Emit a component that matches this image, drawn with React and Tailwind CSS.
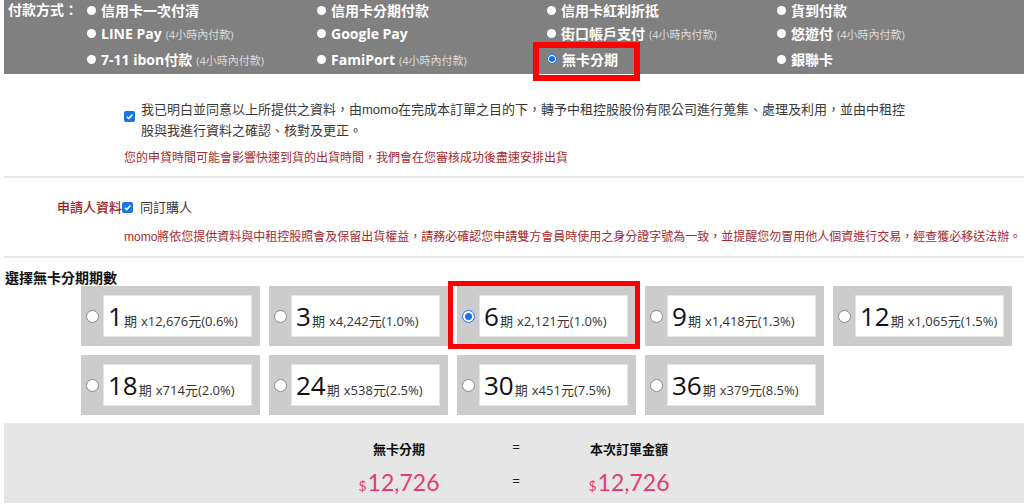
import React from "react";

const cjk = '"Noto Sans CJK TC", sans-serif';
const barFont = { fontFamily: '"Open Sans", "Noto Sans CJK TC", sans-serif' };
const bodyFont = { fontFamily: '"Liberation Sans", "Noto Sans CJK TC", sans-serif' };

function Dot() {
  return <span className="inline-block w-[9px] h-[9px] rounded-full bg-white shrink-0" />;
}
function DotSel() {
  return (
    <span className="inline-flex items-center justify-center w-[10px] h-[10px] rounded-full bg-white border border-[#1a73e8] shrink-0">
      <span className="w-[6px] h-[6px] rounded-full bg-[#1a73e8]" />
    </span>
  );
}

function PayItem({ label, note, selected, children }) {
  return (
    <div className="relative flex items-center gap-[5px] w-[230px] pl-[1px]">
      {selected ? <DotSel /> : <Dot />}
      <span className="text-white font-bold text-[14px] whitespace-nowrap">
        {label}
        {note && <span className="font-normal text-[11px] text-[#dcdcdc] ml-[4px]">{note}</span>}
      </span>
      {children}
    </div>
  );
}

function Check() {
  return (
    <span className="inline-flex items-center justify-center w-[11px] h-[11px] rounded-[2px] bg-[#1a73e8] shrink-0">
      <svg width="9" height="9" viewBox="0 0 10 10">
        <path d="M2 5.2 L4.2 7.3 L8.2 2.8" fill="none" stroke="white" strokeWidth="1.7" />
      </svg>
    </span>
  );
}

function Radio({ selected }) {
  if (selected)
    return (
      <span className="inline-flex items-center justify-center w-[13px] h-[13px] rounded-full border border-[#1a73e8] bg-white shrink-0">
        <span className="w-[7px] h-[7px] rounded-full bg-[#1a73e8]" />
      </span>
    );
  return <span className="inline-block w-[13px] h-[13px] rounded-full border border-[#8a8a8a] bg-white shrink-0" />;
}

const plans = [
  ["1", "12,676", "0.6"],
  ["3", "4,242", "1.0"],
  ["6", "2,121", "1.0"],
  ["9", "1,418", "1.3"],
  ["12", "1,065", "1.5"],
  ["18", "714", "2.0"],
  ["24", "538", "2.5"],
  ["30", "451", "7.5"],
  ["36", "379", "8.5"],
];

function Card({ n, amt, rate, selected }) {
  return (
    <div className="relative h-[60px] bg-[#cccccc] flex items-center pl-[5px] pr-[8px] py-[9px]">
      <Radio selected={selected} />
      <div className="ml-[4px] flex-1 h-full bg-white border border-[#e4e4e4] flex items-center pl-[4px] pt-[2px]">
        <span className="flex items-baseline text-[#333]" style={barFont}>
          <span className="text-[26px] leading-none text-[#111]">{n}</span>
          <span className="text-[13px] ml-[1px]" style={{ fontFamily: cjk }}>期</span>
          <span className="text-[13px] ml-[4px]">x{amt}元({rate}%)</span>
        </span>
      </div>
      {selected && (
        <div className="absolute left-[-9px] top-[-5px] w-[192px] h-[68px] border-[5px] border-[#ff0000] z-10" />
      )}
    </div>
  );
}

function Amount() {
  return (
    <div className="mt-[10px] flex items-baseline text-[#e5397a]" style={{ fontFamily: '"Lato", sans-serif' }}>
      <span className="text-[14px] mr-[1px]">$</span>
      <span className="text-[23px] leading-[28px] font-normal">12,726</span>
    </div>
  );
}

export default function App() {
  return (
    <div className="w-[1024px] h-[504px] overflow-hidden bg-white pl-[4px]" style={bodyFont}>
      {/* Payment method bar */}
      <div className="bg-[#808080] h-[74px] flex" style={barFont}>
        <div className="w-[82px] pl-[4px] text-white font-bold text-[14px] leading-[20px]">付款方式：</div>
        <div className="flex flex-col">
          <div className="flex h-[20px]">
            <PayItem label="信用卡一次付清" />
            <PayItem label="信用卡分期付款" />
            <PayItem label="信用卡紅利折抵" />
            <PayItem label="貨到付款" />
          </div>
          <div className="flex h-[26px]">
            <PayItem label="LINE Pay" note="(4小時內付款)" />
            <PayItem label="Google Pay" />
            <PayItem label="街口帳戶支付" note="(4小時內付款)" />
            <PayItem label="悠遊付" note="(4小時內付款)" />
          </div>
          <div className="flex h-[26px]">
            <PayItem label="7-11 ibon付款" note="(4小時內付款)" />
            <PayItem label="FamiPort" note="(4小時內付款)" />
            <PayItem label="無卡分期" selected>
              <div className="absolute left-[-13px] top-[-4px] w-[107px] h-[39px] border-[6px] border-[#ff0000] z-10" />
            </PayItem>
            <PayItem label="銀聯卡" />
          </div>
        </div>
      </div>

      {/* Consent */}
      <div className="pl-[120px] pt-[25px]">
        <div className="flex items-start gap-[6px]">
          <span className="mt-[5px]"><Check /></span>
          <p className="text-[13px] leading-[21px] text-[#3a3a3a] whitespace-nowrap">
            我已明白並同意以上所提供之資料，由momo在完成本訂單之目的下，轉予中租控股股份有限公司進行蒐集、處理及利用，並由中租控
            <br />
            股與我進行資料之確認、核對及更正。
          </p>
        </div>
        <p className="mt-[8px] text-[12px] leading-[18px] text-[#a8282f] whitespace-nowrap">
          您的申貸時間可能會影響快速到貨的出貨時間，我們會在您審核成功後盡速安排出貨
        </p>
      </div>
      <div className="mt-[9px] h-[2px] bg-[#e8e8e8]" />

      {/* Applicant */}
      <div className="pt-[19px]">
        <div className="flex items-center h-[21px] pl-[53px]">
          <span className="text-[13px] text-[#a31f24] font-medium">申請人資料</span>
          <Check />
          <span className="ml-[7px] text-[13px] text-[#3a3a3a]">同訂購人</span>
        </div>
        <p className="mt-[10px] pl-[120px] text-[12px] leading-[18px] text-[#a8282f] whitespace-nowrap">
          momo將依您提供資料與中租控股照會及保留出貨權益，請務必確認您申請雙方會員時使用之身分證字號為一致，並提醒您勿冒用他人個資進行交易，經查獲必移送法辦。
        </p>
      </div>
      <div className="mt-[10px] h-[2px] bg-[#e8e8e8]" />

      {/* Plans */}
      <div className="mt-[10px] pl-[1px] text-[14px] leading-[18px] font-bold text-[#111]" style={{ fontFamily: cjk }}>
        選擇無卡分期期數
      </div>
      <div className="ml-[77px] w-[931px] grid grid-cols-5 gap-x-[9px] gap-y-[9px]">
        {plans.map(([n, a, r]) => (
          <Card key={n} n={n} amt={a} rate={r} selected={n === "6"} />
        ))}
      </div>

      {/* Summary */}
      <div className="mt-[8px] bg-[#e6e6e6] h-[80px] pt-[17px] flex justify-center">
        <div className="flex">
          <div className="w-[200px] flex flex-col items-center">
            <div className="text-[13px] leading-[18px] font-bold text-[#111]" style={{ fontFamily: cjk }}>無卡分期</div>
            <Amount />
          </div>
          <div className="w-[30px] flex flex-col items-center text-[#222] text-[13px] pl-[4px]">
            <div className="leading-[14px]">=</div>
            <div className="mt-[20px] leading-[14px]">=</div>
          </div>
          <div className="w-[200px] flex flex-col items-center">
            <div className="text-[13px] leading-[18px] font-bold text-[#111]" style={{ fontFamily: cjk }}>本次訂單金額</div>
            <Amount />
          </div>
        </div>
      </div>
    </div>
  );
}
